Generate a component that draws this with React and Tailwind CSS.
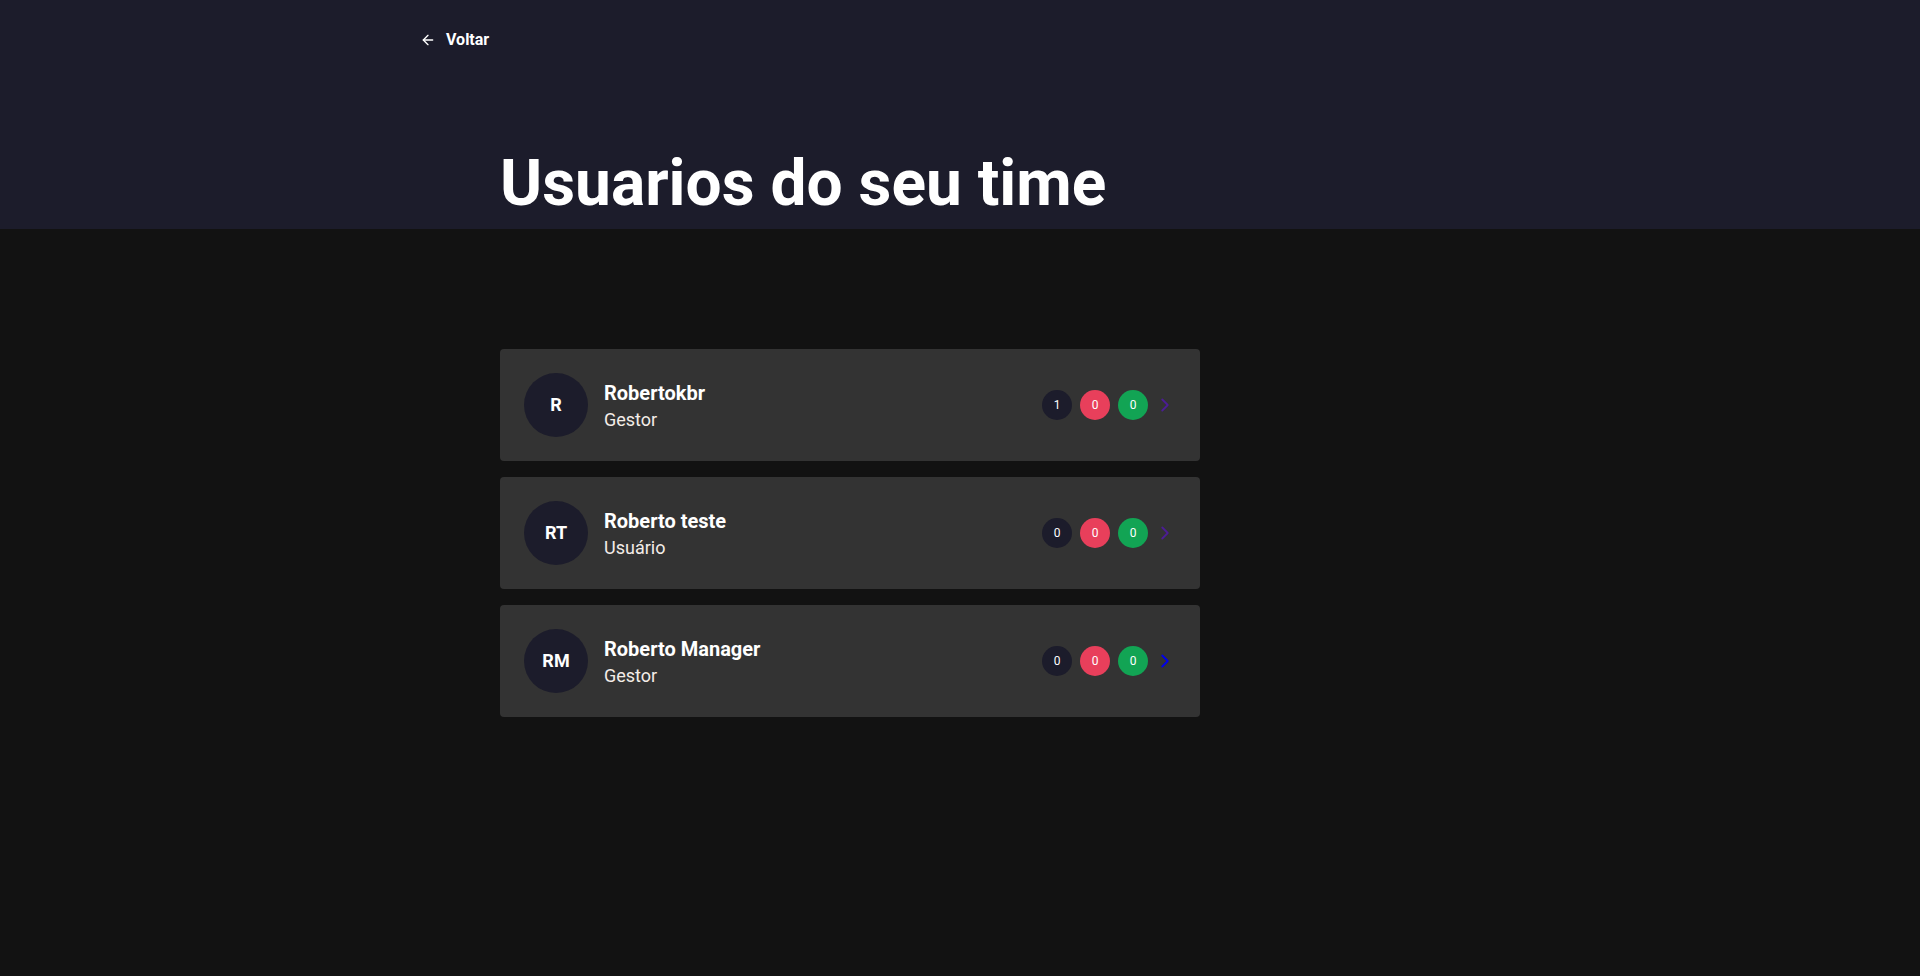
import { ArrowLeft, ChevronRight } from 'lucide-react';

const users = [
  { initials: 'R', name: 'Robertokbr', role: 'Gestor', counts: [1, 0, 0], chevron: 'text-[#4c1d95]' },
  { initials: 'RT', name: 'Roberto teste', role: 'Usuário', counts: [0, 0, 0], chevron: 'text-[#4c1d95]' },
  { initials: 'RM', name: 'Roberto Manager', role: 'Gestor', counts: [0, 0, 0], chevron: 'text-[#0000ee]' },
];

function UserCard({ user }) {
  return (
    <div className="flex items-center bg-[#333333] rounded p-6 h-[112px]">
      <div className="w-16 h-16 rounded-full bg-[#1c1c2b] flex items-center justify-center text-white font-bold text-lg">
        {user.initials}
      </div>
      <div className="ml-4 pt-[3px] flex flex-col">
        <span className="text-white font-bold text-xl leading-6">{user.name}</span>
        <span className="text-[#f4ede8] text-lg leading-6 mt-[3px]">{user.role}</span>
      </div>
      <div className="ml-auto flex items-center gap-2">
        <span className="w-[30px] h-[30px] rounded-full bg-[#1c1c2b] text-white text-xs flex items-center justify-center">{user.counts[0]}</span>
        <span className="w-[30px] h-[30px] rounded-full bg-[#e83f5b] text-white text-xs flex items-center justify-center">{user.counts[1]}</span>
        <span className="w-[30px] h-[30px] rounded-full bg-[#12a454] text-white text-xs flex items-center justify-center">{user.counts[2]}</span>
        <ChevronRight size={22} strokeWidth={2} className={`-ml-0.5 ${user.chevron}`} />
      </div>
    </div>
  );
}

export default function App() {
  return (
    <div className="min-h-screen bg-[#121212]" style={{ fontFamily: 'Roboto, sans-serif' }}>
      <header className="bg-[#1c1c2b] h-[229px] flex flex-col">
        <a href="#" className="ml-[420px] mt-7 flex items-center gap-[10px] text-white font-bold text-base leading-6 w-fit">
          <ArrowLeft size={16} strokeWidth={2} />
          Voltar
        </a>
        <h1 className="ml-[500px] mt-[100px] text-white font-bold text-[64px] leading-none">Usuarios do seu time</h1>
      </header>
      <main className="ml-[500px] w-[700px] mt-[120px] flex flex-col gap-4">
        {users.map((u) => (
          <UserCard key={u.initials} user={u} />
        ))}
      </main>
    </div>
  );
}
